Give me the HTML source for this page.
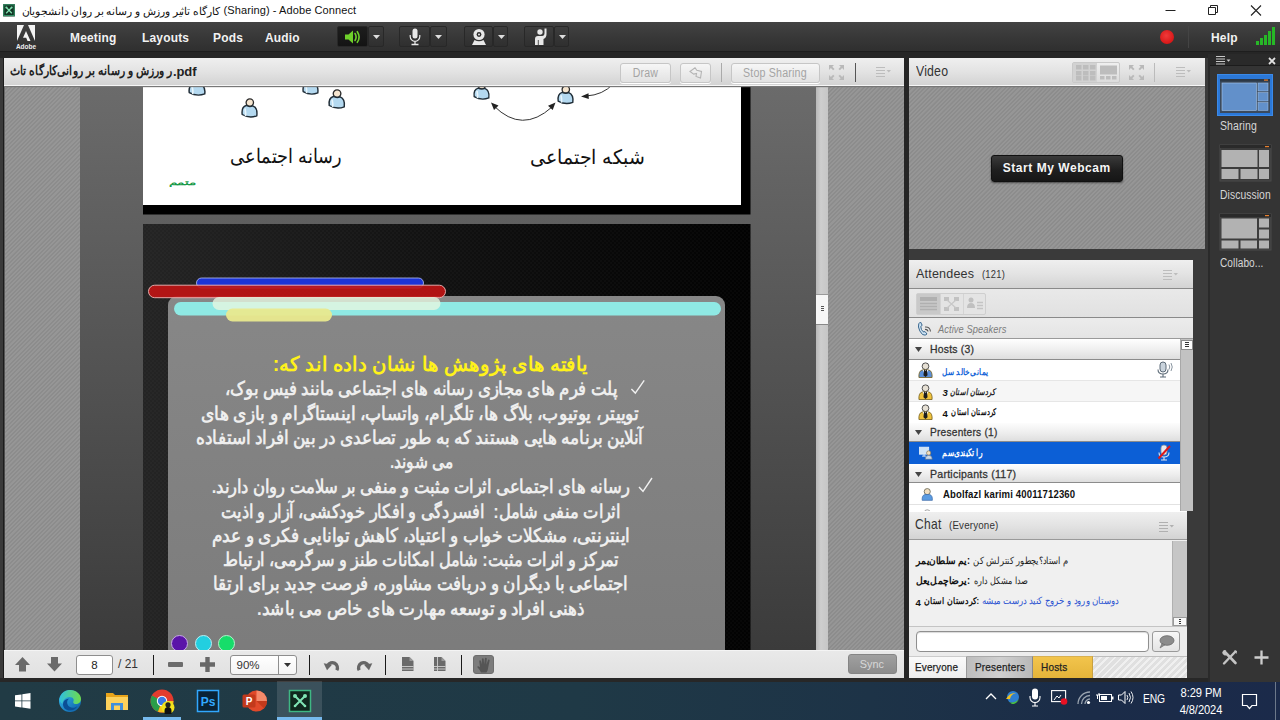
<!DOCTYPE html>
<html lang="en">
<head>
<meta charset="utf-8">
<title>Adobe Connect</title>
<style>
*{box-sizing:border-box;margin:0;padding:0}
html,body{width:1280px;height:720px;overflow:hidden}
body{position:relative;background:#3a3a3a;font-family:"Liberation Sans",sans-serif;font-size:12px;color:#222}
.abs{position:absolute}
svg{position:absolute;overflow:visible}
#titlebar{left:0;top:0;width:1280px;height:22px;background:#fff}
#menubar{left:0;top:22px;width:1280px;height:30px;background:linear-gradient(#434343,#383838 50%,#2f2f2f);border-bottom:1px solid #1e1e1e}
#band{left:0;top:52px;width:1280px;height:6px;background:#262626}
.menu{position:absolute;top:8px;color:#f2f2f2;font-weight:bold;font-size:13px;letter-spacing:0.2px;white-space:nowrap;transform:scaleX(0.92);transform-origin:0 0}
.nx{transform:scaleX(0.92);transform-origin:0 0}
.tbtn{position:absolute;top:4px;height:21px;background:linear-gradient(#3d3d3d,#2f2f2f);border:1px solid #282828;border-radius:2px}
.hatch{background-color:#919191;background-image:repeating-linear-gradient(135deg,#969696 0 1.4px,#8c8c8c 1.6px 2.9px,#969696 3px)}
.podhead{position:absolute;left:0;top:0;right:0;height:28px;background:linear-gradient(#efefef,#e3e3e3 50%,#d3d3d3);border-bottom:1px solid #f6f6f6;box-shadow:0 1px 1px #777}
.podtitle{position:absolute;left:7px;top:6px;font-size:13px;color:#333;white-space:nowrap;letter-spacing:0.2px}
.pod{position:absolute;overflow:hidden}
</style>
</head>
<body>
<!-- ===== title bar ===== -->
<div id="titlebar" class="abs">
<svg style="left:3px;top:4px" width="12" height="12.500" viewBox="0 0 15 15" preserveAspectRatio="none"><rect width="15" height="15" rx="1" fill="#1d3b2c"/><rect x="1" y="1" width="13" height="13" fill="#123524" stroke="#3fae7c" stroke-width="1"/><path d="M4 4l7 7M11 4l-7 7" stroke="#7fe0b0" stroke-width="1.6"/><circle cx="4.2" cy="4.2" r="1.3" fill="#7fe0b0"/><circle cx="10.800" cy="4.2" r="1.3" fill="#7fe0b0"/></svg>
<svg style="left:0;top:0" width="400" height="22" role="img" aria-label="کارگاه تاثیر ورزش و رسانه بر روان دانشجویان"><text x="120.6" y="15.2" font-size="11" fill="#111" text-anchor="middle" direction="rtl" textLength="197.8" lengthAdjust="spacingAndGlyphs" font-family="'Liberation Sans',sans-serif">کارگاه تاثیر ورزش و رسانه بر روان دانشجویان</text></svg>
<div id="ttl" class="abs" style="left:223.500px;top:4px;font-size:11px;color:#111;white-space:nowrap;letter-spacing:0.1px">(Sharing) - Adobe Connect</div>
<svg style="left:1150px;top:0" width="130" height="22"><path d="M15.5 10.5h10" stroke="#222" stroke-width="1"/><path d="M58.5 7.5h7v7h-7zM60.5 7.5v-2h7v7h-2" fill="none" stroke="#222" stroke-width="1"/><path d="M101 5.5l10 10M111 5.5l-10 10" stroke="#222" stroke-width="1.1"/></svg>
</div>
<!-- ===== menu bar ===== -->
<div id="menubar" class="abs">
<svg style="left:14px;top:2px" width="24" height="27" viewBox="0 0 24 27"><path d="M3 1h7L3 17zM14 1h7v16zM12 7l4.5 10h-3l-1.3-3.2H9z" fill="#f4f4f4"/><text x="12" y="25" font-size="6.5" font-weight="bold" text-anchor="middle" fill="#eee" font-family="Liberation Sans,sans-serif">Adobe</text></svg>
<div class="menu" style="left:70px">Meeting</div>
<div class="menu" style="left:142px">Layouts</div>
<div class="menu" style="left:213px">Pods</div>
<div class="menu" style="left:265px">Audio</div>
<div class="tbtn" style="left:337px;width:31px;background:linear-gradient(#1d1d1d,#141414)"><svg style="left:6px;top:2px" width="20" height="16" viewBox="0 0 20 16"><path d="M1 5.5h3.5L9 1.5v13L4.5 10.5H1z" fill="#6ed02a"/><path d="M11 4.5q2.2 3.5 0 7M13.3 2.7q3.6 5.3 0 10.6" fill="none" stroke="#6ed02a" stroke-width="1.6" stroke-linecap="round"/></svg></div><div class="tbtn" style="left:368px;width:16px"><svg style="left:4px;top:8px" width="8" height="5"><path d="M0 0h7l-3.5 4z" fill="#ddd"/></svg></div>
<div class="tbtn" style="left:399px;width:31px;background:linear-gradient(#3d3d3d,#2f2f2f)"><svg style="left:9px;top:1px" width="12" height="18" viewBox="0 0 12 18"><rect x="3.5" y="0.5" width="5" height="10" rx="2.5" fill="#e8e8e8"/><path d="M1.2 7v1.5a4.8 4.8 0 0 0 9.6 0V7" fill="none" stroke="#e8e8e8" stroke-width="1.2"/><path d="M6 13.5v2.5M2.5 16.5h7" stroke="#e8e8e8" stroke-width="1.3"/></svg></div><div class="tbtn" style="left:430px;width:17px"><svg style="left:4px;top:8px" width="8" height="5"><path d="M0 0h7l-3.5 4z" fill="#ddd"/></svg></div>
<div class="tbtn" style="left:464px;width:29px;background:linear-gradient(#3d3d3d,#2f2f2f)"><svg style="left:6px;top:1px" width="16" height="18" viewBox="0 0 16 18"><circle cx="8" cy="6.5" r="5.6" fill="#e8e8e8"/><circle cx="8" cy="6.5" r="2.4" fill="#2c2c2c"/><circle cx="8" cy="6.5" r="1" fill="#e8e8e8"/><path d="M3.5 12L1 17h14l-2.500-5q-4.500 2.500-9 0z" fill="#e8e8e8"/></svg></div><div class="tbtn" style="left:493px;width:15px"><svg style="left:4px;top:8px" width="8" height="5"><path d="M0 0h7l-3.5 4z" fill="#ddd"/></svg></div>
<div class="tbtn" style="left:524px;width:30px;background:linear-gradient(#3d3d3d,#2f2f2f)"><svg style="left:8px;top:0px" width="16" height="19" viewBox="0 0 16 19"><circle cx="7" cy="5" r="2.7" fill="#e8e8e8"/><path d="M2 18v-6q0-3 3-3h4q2.500 0 2.500-3V1.500h2V7q0 4-3 5v6z" fill="#e8e8e8"/><path d="M5.300 13v5" stroke="#2c2c2c" stroke-width="0.8"/></svg></div><div class="tbtn" style="left:554px;width:15px"><svg style="left:4px;top:8px" width="8" height="5"><path d="M0 0h7l-3.5 4z" fill="#ddd"/></svg></div>
<div class="abs" style="left:1160px;top:8px;width:14px;height:14px;border-radius:7px;background:radial-gradient(circle at 45% 40%,#f03a3a,#d81818 70%,#b01010)"></div>
<div class="abs" style="left:1188px;top:4px;width:1px;height:22px;background:#444"></div>
<div class="menu" style="left:1211px">Help</div>
<svg style="left:1256px;top:5px" width="22" height="20"><rect x="0" y="14" width="3" height="4" fill="#27b827"/><rect x="4" y="11" width="3" height="7" fill="#27b827"/><rect x="8" y="8" width="3" height="10" fill="#27b827"/><rect x="12" y="4" width="3" height="14" fill="#27b827"/><rect x="16" y="0" width="3" height="18" fill="#27b827"/></svg>
</div>
<div id="band" class="abs"></div>
<div class="abs" style="left:904px;top:58px;width:5px;height:620px;background:#252525"></div>
<div class="abs" style="left:3px;top:58px;width:1px;height:620px;background:#1c1c1c"></div>
<div class="abs" style="left:0;top:678px;width:1208px;height:4px;background:#272727"></div>
<!-- ===== share pod ===== -->
<div id="share" class="pod" style="left:4px;top:58px;width:900px;height:620px;background:linear-gradient(#6b6b6b 28px,#3b3b3b 592px)">
<div class="abs hatch" style="left:1px;top:28px;width:75px;height:564px"></div>
<div class="abs hatch" style="left:824px;top:28px;width:76px;height:564px"></div>
<div class="abs" style="left:812px;top:28px;width:12px;height:564px;background:linear-gradient(90deg,#b8b8b8,#cecece 40%,#c6c6c6)"></div>
<div class="abs" style="left:812px;top:236px;width:12px;height:31px;background:#f6f6f6;border-top:1px solid #999;border-bottom:1px solid #888"></div>
<div class="abs" style="left:817px;top:248px;width:3px;height:1px;background:#555;box-shadow:0 2px 0 #555,0 4px 0 #555"></div>
<svg style="left:-4px;top:-58px" width="1280" height="720" viewBox="0 0 1280 720" role="img" aria-label="رسانه اجتماعی - شبکه اجتماعی - یافته های پژوهش ها نشان داده اند که: پلت فرم های مجازی رسانه های اجتماعی مانند فیس بوک، توییتر، یوتیوب، بلاگ ها، تلگرام، واتساپ، اینستاگرام و بازی های آنلاین برنامه هایی هستند که به طور تصاعدی در بین افراد استفاده می شوند. رسانه های اجتماعی اثرات مثبت و منفی بر سلامت روان دارند.">
<defs><linearGradient id="sl2" x1="0" y1="0" x2="1" y2="0"><stop offset="0" stop-color="#242424"/><stop offset="0.300" stop-color="#181818"/><stop offset="0.700" stop-color="#0a0a0a"/><stop offset="1" stop-color="#020202"/></linearGradient><linearGradient id="gbox" x1="0" y1="0" x2="0" y2="1"><stop offset="0" stop-color="#878787"/><stop offset="0.500" stop-color="#818181"/><stop offset="1" stop-color="#7b7b7b"/></linearGradient><pattern id="cf" width="4" height="4" patternUnits="userSpaceOnUse"><rect width="2" height="2" fill="rgba(255,255,255,0.02)"/><rect x="2" y="2" width="2" height="2" fill="rgba(255,255,255,0.02)"/></pattern><clipPath id="slclip"><rect x="143" y="86" width="608" height="564"/></clipPath></defs>
<g clip-path="url(#slclip)">
<rect x="143" y="80" width="607.500" height="134.500" fill="#000"/>
<rect x="143" y="80" width="598" height="125" fill="#fff"/>
<g transform="translate(188.0 77.0) scale(1.059 0.950)"><circle cx="8.800" cy="4.600" r="3.700" fill="#f6e6d0" stroke="#2a2a2a" stroke-width="1.300"/><path d="M1.200 16.500q-1-7.500 4-9q3.300 1.800 6.600 0.300q5 2 4 10q-7.300 3-14.600-1.300z" fill="#b4d9f0" stroke="#1f2c36" stroke-width="1.400"/><path d="M4 10.500q1 5 0.500 7.500" stroke="#e9f6fd" stroke-width="1.600" fill="none"/></g>
<g transform="translate(241.0 98.0) scale(1.000 1.000)"><circle cx="8.800" cy="4.600" r="3.700" fill="#f6e6d0" stroke="#2a2a2a" stroke-width="1.300"/><path d="M1.200 16.500q-1-7.500 4-9q3.300 1.800 6.600 0.300q5 2 4 10q-7.300 3-14.600-1.300z" fill="#b4d9f0" stroke="#1f2c36" stroke-width="1.400"/><path d="M4 10.500q1 5 0.500 7.500" stroke="#e9f6fd" stroke-width="1.600" fill="none"/></g>
<g transform="translate(302.0 76.0) scale(1.000 0.950)"><circle cx="8.800" cy="4.600" r="3.700" fill="#f6e6d0" stroke="#2a2a2a" stroke-width="1.300"/><path d="M1.200 16.500q-1-7.500 4-9q3.300 1.800 6.600 0.300q5 2 4 10q-7.300 3-14.600-1.300z" fill="#b4d9f0" stroke="#1f2c36" stroke-width="1.400"/><path d="M4 10.500q1 5 0.500 7.500" stroke="#e9f6fd" stroke-width="1.600" fill="none"/></g>
<g transform="translate(328.0 89.0) scale(1.029 1.000)"><circle cx="8.800" cy="4.600" r="3.700" fill="#f6e6d0" stroke="#2a2a2a" stroke-width="1.300"/><path d="M1.200 16.500q-1-7.500 4-9q3.300 1.800 6.600 0.300q5 2 4 10q-7.300 3-14.600-1.300z" fill="#b4d9f0" stroke="#1f2c36" stroke-width="1.400"/><path d="M4 10.500q1 5 0.500 7.500" stroke="#e9f6fd" stroke-width="1.600" fill="none"/></g>
<g transform="translate(473.0 81.0) scale(1.000 0.950)"><circle cx="8.800" cy="4.600" r="3.700" fill="#f6e6d0" stroke="#2a2a2a" stroke-width="1.300"/><path d="M1.200 16.500q-1-7.500 4-9q3.300 1.800 6.600 0.300q5 2 4 10q-7.300 3-14.600-1.300z" fill="#b4d9f0" stroke="#1f2c36" stroke-width="1.400"/><path d="M4 10.500q1 5 0.500 7.500" stroke="#e9f6fd" stroke-width="1.600" fill="none"/></g>
<g transform="translate(557.0 85.0) scale(1.000 0.975)"><circle cx="8.800" cy="4.600" r="3.700" fill="#f6e6d0" stroke="#2a2a2a" stroke-width="1.300"/><path d="M1.200 16.500q-1-7.500 4-9q3.300 1.800 6.600 0.300q5 2 4 10q-7.300 3-14.600-1.300z" fill="#b4d9f0" stroke="#1f2c36" stroke-width="1.400"/><path d="M4 10.500q1 5 0.500 7.500" stroke="#e9f6fd" stroke-width="1.600" fill="none"/></g>
<path d="M494 106Q522 134 552 107" fill="none" stroke="#333" stroke-width="1"/>
<path d="M491 102.500l7.500 3-4.500 4.500zM555.500 102.500l-7.500 3.200 4.700 4.300z" fill="#222"/>
<path d="M613 84Q603 95 586 96" fill="none" stroke="#333" stroke-width="1"/>
<path d="M581 96.500l7.500-3.300 0.300 5.800z" fill="#222"/>
<text x="286.1" y="163" font-size="20" fill="#111" text-anchor="middle" direction="rtl" textLength="112.3" lengthAdjust="spacingAndGlyphs" font-family="'Liberation Sans',sans-serif">رسانه اجتماعی</text>
<text x="587.5" y="163.5" font-size="20" fill="#111" text-anchor="middle" direction="rtl" textLength="115.2" lengthAdjust="spacingAndGlyphs" font-family="'Liberation Sans',sans-serif">شبکه اجتماعی</text>
<text x="182" y="184.500" font-size="8" font-weight="bold" fill="#1a9a4a" text-anchor="middle" direction="rtl" textLength="27" lengthAdjust="spacingAndGlyphs" font-family="'Liberation Sans',sans-serif">متمم</text>
<rect x="143" y="224" width="607.500" height="430" fill="url(#sl2)"/>
<rect x="143" y="224" width="607.500" height="430" fill="url(#cf)"/>
<rect x="168" y="296" width="557" height="380" rx="9" fill="url(#gbox)"/>
<rect x="196.500" y="278" width="227" height="10" rx="5" fill="#1c34d6" stroke="#b8c2f4" stroke-width="0.800"/>
<rect x="148.500" y="285.200" width="297" height="12.500" rx="6.200" fill="#c21414" fill-opacity="0.900" stroke="#f0b8b8" stroke-width="0.900"/>
<rect x="174" y="302" width="547" height="13.500" rx="6.700" fill="#8fe9e4"/>
<rect x="212.500" y="297" width="228" height="13" rx="6.500" fill="#e6f6e0" fill-opacity="0.800"/>
<rect x="226" y="308.500" width="106" height="13" rx="6.500" fill="#e9e98e" fill-opacity="0.950"/>
<circle cx="179.500" cy="643.500" r="8" fill="#5a14a8" stroke="#c9a8e8" stroke-width="1"/>
<circle cx="203.500" cy="643.500" r="8" fill="#22cfe0" stroke="#b8f0f4" stroke-width="1"/>
<circle cx="226.500" cy="643.500" r="8" fill="#16dd6a" stroke="#b0f4cc" stroke-width="1"/>
<text x="430.4" y="370.5" font-size="20" font-weight="bold" fill="#fff21a" text-anchor="middle" direction="rtl" textLength="315.3" lengthAdjust="spacingAndGlyphs" font-family="'Liberation Sans',sans-serif">یافته های پژوهش ها نشان داده اند که:</text>
<g font-size="19" font-weight="bold" fill="#eeeeee" text-anchor="middle" direction="rtl" font-family="'Liberation Sans',sans-serif">
<text x="420.9" y="395" textLength="392" lengthAdjust="spacingAndGlyphs">پلت فرم های مجازی رسانه های اجتماعی مانند فیس بوک،</text>
<text x="419.8" y="419.6" textLength="438.2" lengthAdjust="spacingAndGlyphs">توییتر، یوتیوب، بلاگ ها، تلگرام، واتساپ، اینستاگرام و بازی های</text>
<text x="419.5" y="443.9" textLength="446.5" lengthAdjust="spacingAndGlyphs">آنلاین برنامه هایی هستند که به طور تصاعدی در بین افراد استفاده</text>
<text x="421.5" y="468.2" textLength="63.2" lengthAdjust="spacingAndGlyphs">می شوند.</text>
<text x="420.7" y="493.2" textLength="418" lengthAdjust="spacingAndGlyphs">رسانه های اجتماعی اثرات مثبت و منفی بر سلامت روان دارند.</text>
<text x="420.6" y="517.5" textLength="398.9" lengthAdjust="spacingAndGlyphs" xml:space="preserve">اثرات منفی شامل:  افسردگی و افکار خودکشی، آزار و اذیت</text>
<text x="420.7" y="541.8" textLength="418" lengthAdjust="spacingAndGlyphs">اینترنتی، مشکلات خواب و اعتیاد، کاهش توانایی فکری و عدم</text>
<text x="420.8" y="566.1" textLength="395.8" lengthAdjust="spacingAndGlyphs">تمرکز و اثرات مثبت: شامل امکانات طنز و سرگرمی، ارتباط</text>
<text x="420.3" y="590.4" textLength="415.2" lengthAdjust="spacingAndGlyphs">اجتماعی با دیگران و دریافت مشاوره، فرصت جدید برای ارتقا</text>
<text x="420.5" y="614.7" textLength="327" lengthAdjust="spacingAndGlyphs">ذهنی افراد و توسعه مهارت های خاص می باشد.</text>
</g>
<path d="M631.400 389l3.900 4.100 8.900-12.800" fill="none" stroke="#f0f0f0" stroke-width="1.400"/>
<path d="M639 487l4 4.300 9-13.300" fill="none" stroke="#f0f0f0" stroke-width="1.400"/>
</g>
</svg>
<div class="podhead">
<svg style="left:-4px;top:-58px" width="400" height="100" role="img" aria-label="pdf.ر ورزش و رسانه بر روان"><text x="90.9" y="74.5" font-size="13" font-weight="bold" fill="#222" text-anchor="middle" direction="rtl" textLength="162.5" lengthAdjust="spacingAndGlyphs" font-family="'Liberation Sans',sans-serif">ر ورزش و رسانه بر روانی‌کارگاه تاث</text></svg>
<div class="abs" style="left:169px;top:5.500px;font-size:13px;font-weight:bold;color:#222;letter-spacing:-0.1px">.pdf</div>
<div class="abs" style="left:615.5px;top:4.500px;width:51.5px;height:20px;border:1px solid #c6c6c6;border-radius:3px;background:linear-gradient(#f6f6f6,#e2e2e2);box-shadow:0 1px 0 #fff;color:#a4a4a4;font-size:12px;text-align:center;line-height:18px;letter-spacing:0.2px"><span style="display:inline-block;transform:scaleX(0.88)">Draw</span></div>
<div class="abs" style="left:675.5px;top:4.500px;width:31.5px;height:20px;border:1px solid #c6c6c6;border-radius:3px;background:linear-gradient(#f6f6f6,#e2e2e2);box-shadow:0 1px 0 #fff;color:#a4a4a4;font-size:12px;text-align:center;line-height:18px;letter-spacing:0.2px"><svg style="left:8px;top:3px" width="14" height="13" viewBox="0 0 14 13"><path d="M1 4.500L6 0.800l1.800 2.500 4.700 1.200-1 6.500-4.500-1.500 0.500-3-2.800 0.600z" fill="none" stroke="#b4b4b4" stroke-width="1.100"/></svg></div>
<div class="abs" style="left:717px;top:5px;width:1px;height:19px;background:#aaa"></div>
<div class="abs" style="left:726.5px;top:4.500px;width:89.0px;height:20px;border:1px solid #c6c6c6;border-radius:3px;background:linear-gradient(#f6f6f6,#e2e2e2);box-shadow:0 1px 0 #fff;color:#a4a4a4;font-size:12px;text-align:center;line-height:18px;letter-spacing:0.2px"><span style="display:inline-block;transform:scaleX(0.89);white-space:nowrap">Stop Sharing</span></div>
<svg style="left:825px;top:7px" width="15" height="15"><path d="M0 0h5l-1.700 1.700 2.200 2.200-1.400 1.400-2.200-2.200L0 5zM15 0h-5l1.700 1.700-2.200 2.200 1.400 1.400 2.200-2.200L15 5zM0 15h5l-1.700-1.700 2.200-2.200-1.400-1.400-2.200 2.200L0 10zM15 15h-5l1.700-1.700-2.200-2.200 1.400-1.400 2.200 2.200L15 10z" fill="#b9b9b9"/></svg>
<div class="abs" style="left:851px;top:5px;width:1px;height:19px;background:#555"></div>
<svg style="left:872px;top:9px" width="16" height="11"><path d="M0 0.500h9M0 3.500h9M0 6.500h9M0 9.500h9" stroke="#bdbdbd" stroke-width="1"/><path d="M10.500 3h4.500l-2.200 2.500z" fill="#bdbdbd"/></svg>
</div>
<div class="abs" style="left:0;top:592px;width:900px;height:28px;background:linear-gradient(#e9e9e9,#e1e1e1);border-top:1px solid #f4f4f4">
<svg style="left:11px;top:6px" width="15" height="15"><path d="M7.500 0L15 8h-4v6.500H4V8H0z" fill="#6a6a6a"/></svg>
<svg style="left:43px;top:6px" width="15" height="15"><g transform="rotate(180 7.500 7.250)"><path d="M7.500 0L15 8h-4v6.500H4V8H0z" fill="#6a6a6a"/></g></svg>
<div class="abs" style="left:72px;top:3.500px;width:37px;height:20px;border:1px solid #8e8e8e;border-radius:3px;background:#fff;text-align:center;font-size:11.500px;line-height:18px;color:#222">8</div>
<div class="abs" style="left:114px;top:6px;font-size:12px;color:#333;white-space:nowrap">/ 21</div>
<div class="abs" style="left:148.7px;top:3.500px;width:1px;height:20px;background:#1a1a1a"></div>
<div class="abs" style="left:305.2px;top:3.500px;width:1px;height:20px;background:#1a1a1a"></div>
<div class="abs" style="left:381.2px;top:3.500px;width:1px;height:20px;background:#1a1a1a"></div>
<div class="abs" style="left:457.2px;top:3.500px;width:1px;height:20px;background:#1a1a1a"></div>
<div class="abs" style="left:164px;top:11px;width:15px;height:4.500px;background:#6c6c6c;border-radius:1px"></div>
<svg style="left:195.500px;top:6px" width="15" height="15"><path d="M5.300 0h4.400v5.300H15v4.400H9.700V15H5.300V9.700H0V5.300h5.300z" fill="#686868"/></svg>
<div class="abs" style="left:225.500px;top:3.500px;width:67.500px;height:20px;border:1px solid #8e8e8e;border-radius:3px;background:linear-gradient(#fff,#f4f4f4);font-size:11.500px;line-height:19px;color:#333;padding-left:6px">90%<div class="abs" style="left:47px;top:0;width:1px;height:18px;background:#8e8e8e"></div><svg style="left:53px;top:7px" width="8" height="5"><path d="M0 0h7l-3.500 4z" fill="#333"/></svg></div>
<svg style="left:320px;top:6.500px" width="16" height="14" viewBox="0 0 16 14"><path d="M12.800 12.300A4.800 4.800 0 1 0 3.800 7.300" stroke="#666" stroke-width="3.300" fill="none"/><path d="M-0.300 5.300l8.300 1.400-5 5.600z" fill="#666"/></svg>
<svg style="left:352px;top:6.500px" width="16" height="14" viewBox="0 0 16 14"><g transform="translate(16 0) scale(-1 1)"><path d="M12.800 12.300A4.800 4.800 0 1 0 3.800 7.300" stroke="#666" stroke-width="3.300" fill="none"/><path d="M-0.300 5.300l8.300 1.400-5 5.600z" fill="#666"/></g></svg>
<svg style="left:398px;top:6px" width="12" height="15"><path d="M0 0h7.500l4 4v10H0z" fill="#6a6a6a"/><path d="M7.500 0v4h4z" fill="#9a9a9a"/><path d="M0 9.500h11.500M0 12h11.500" stroke="#cfcfcf" stroke-width="0.900"/></svg>
<svg style="left:430px;top:6px" width="12" height="15"><path d="M0 0h7.500l4 4v10H0z" fill="#6a6a6a"/><path d="M7.500 0v4h4z" fill="#9a9a9a"/><path d="M0 9.500h11.500M0 12h11.500M3.500 0v14" stroke="#cfcfcf" stroke-width="0.900"/></svg>
<div class="abs" style="left:469px;top:3.500px;width:21px;height:19.500px;border-radius:3px;background:#7c7c7c;border:1px solid #6e6e6e"><svg style="left:2.500px;top:1.500px" width="15" height="16" viewBox="0 0 15 16"><path d="M4 15.500q-1-2.500-3.800-5.500q.8-1.500 2.800.3L2.200 3.800q.9-1.100 1.700 0l.9 3.700L4.900 1.800q1-1 1.800 0l.4 5.500.9-6.200q1-.9 1.800.1l-.4 6.500 1.700-4.900q1-.6 1.600.4l-1.300 6.300q-.3 3.500-1.900 6z" fill="#555"/></svg></div>
<div class="abs" style="left:844px;top:2.500px;width:48.500px;height:20px;border-radius:3px;background:linear-gradient(#a0a0a0,#8c8c8c);border:1px solid #858585;color:#d8d8d8;font-size:11.500px;text-align:center;line-height:18px"><span style="display:inline-block;transform:scaleX(0.94)">Sync</span></div>
</div>
</div>
<!-- ===== video pod ===== -->
<div id="video" class="pod hatch" style="left:909px;top:58px;width:295.500px;height:191px">
<div class="podhead"><div class="podtitle nx" style="font-size:14px;top:5px;transform:scaleX(0.88)">Video</div>
<div class="abs" style="left:163px;top:4px;width:48px;height:21px;border:1px solid #c9c9c9;border-radius:2px;background:linear-gradient(#efefef,#dcdcdc)"></div>
<svg style="left:164px;top:5px" width="24" height="19"><rect width="24" height="19" fill="#d2d2d2"/><rect x="3" y="2" width="5.500" height="4.500" fill="#bdbdbd"/><rect x="10" y="2" width="5.500" height="4.500" fill="#bdbdbd"/><rect x="17" y="2" width="5.500" height="4.500" fill="#bdbdbd"/><rect x="3" y="8" width="5.500" height="4.500" fill="#bdbdbd"/><rect x="10" y="8" width="5.500" height="4.500" fill="#bdbdbd"/><rect x="17" y="8" width="5.500" height="4.500" fill="#bdbdbd"/><rect x="3" y="13" width="5.500" height="4.500" fill="#bdbdbd"/><rect x="10" y="13" width="5.500" height="4.500" fill="#bdbdbd"/><rect x="17" y="13" width="5.500" height="4.500" fill="#bdbdbd"/></svg>
<svg style="left:188px;top:5px" width="23" height="19"><rect x="3" y="2.500" width="17" height="9" fill="#bdbdbd"/><rect x="3" y="13" width="4.500" height="3.500" fill="#bdbdbd"/><rect x="9" y="13" width="4.500" height="3.500" fill="#bdbdbd"/><rect x="15" y="13" width="4.500" height="3.500" fill="#bdbdbd"/></svg>
<svg style="left:220px;top:7px" width="15" height="15"><path d="M0 0h5l-1.700 1.700 2.200 2.200-1.400 1.400-2.200-2.200L0 5zM15 0h-5l1.700 1.700-2.200 2.200 1.400 1.400 2.200-2.200L15 5zM0 15h5l-1.700-1.700 2.200-2.200-1.400-1.400-2.200 2.200L0 10zM15 15h-5l1.700-1.700-2.200-2.200 1.400-1.400 2.200 2.200L15 10z" fill="#b9b9b9"/></svg>
<div class="abs" style="left:245px;top:5px;width:1px;height:19px;background:#bbb"></div>
<svg style="left:267px;top:9px" width="16" height="11"><path d="M0 0.500h9M0 3.500h9M0 6.500h9M0 9.500h9" stroke="#bdbdbd" stroke-width="1"/><path d="M10.500 3h4.500l-2.200 2.500z" fill="#bdbdbd"/></svg>
</div>
<div class="abs" style="left:82px;top:97px;width:131.500px;height:26.500px;border-radius:3px;background:linear-gradient(#3a3a3a,#1f1f1f 55%,#161616);border:1px solid #111;box-shadow:0 1px 2px rgba(0,0,0,0.5);color:#f6f6f6;font-weight:bold;font-size:12px;text-align:center;line-height:24.500px;letter-spacing:0.55px">Start My Webcam</div>
</div>
<!-- ===== attendees pod ===== -->
<div id="att" class="pod" style="left:909px;top:260px;width:284px;height:251px;background:#fff">
<div class="podhead" style="height:29px;border-bottom:1px solid #8a8a8a;box-shadow:none"><div class="podtitle nx" style="font-size:13.500px;top:6px;transform:scaleX(0.93)">Attendees</div><div class="abs nx" style="left:73px;top:8px;font-size:11px;color:#333;letter-spacing:0.3px;transform:scaleX(0.85)">(121)</div>
<svg style="left:254px;top:10px" width="16" height="11"><path d="M0 0.500h9M0 3.500h9M0 6.500h9M0 9.500h9" stroke="#bdbdbd" stroke-width="1"/><path d="M10.500 3h4.500l-2.200 2.500z" fill="#bdbdbd"/></svg>
</div>
<div class="abs" style="left:0;top:29px;width:284px;height:29px;background:linear-gradient(#e9e9e9,#e1e1e1);border-bottom:1px solid #8a8a8a"></div>
<div class="abs" style="left:7px;top:32.500px;width:70px;height:22px;border:1px solid #cfcfcf;border-radius:2px;background:#e4e4e4"></div>
<div class="abs" style="left:8px;top:33.500px;width:22.500px;height:20px;background:#c9c9c9"></div>
<svg style="left:11px;top:37px" width="17" height="14"><rect width="17" height="4" fill="#b0b0b0"/><path d="M0 6.500h17M0 9.500h17M0 12.500h17" stroke="#b0b0b0" stroke-width="1.500"/></svg>
<div class="abs" style="left:30.500px;top:33.500px;width:1px;height:20px;background:#d4d4d4"></div><div class="abs" style="left:53.500px;top:33.500px;width:1px;height:20px;background:#d4d4d4"></div>
<svg style="left:35px;top:37px" width="15" height="14"><rect x="0" y="0" width="5" height="4" fill="#c2c2c2"/><rect x="10" y="0" width="5" height="4" fill="#c2c2c2"/><rect x="0" y="10" width="5" height="4" fill="#c2c2c2"/><rect x="10" y="10" width="5" height="4" fill="#c2c2c2"/><path d="M3 3l9 8M12 3l-9 8" stroke="#c8c8c8" stroke-width="1.200"/></svg>
<svg style="left:58px;top:37px" width="16" height="14"><circle cx="4" cy="3" r="2.500" fill="#c0c0c0"/><path d="M0 11q0-5 4-5t4 5z" fill="#c0c0c0"/><path d="M10 5.500h6M10 8.500h6M10 11.500h6" stroke="#c4c4c4" stroke-width="1.300"/></svg>
<div class="abs" style="left:0;top:58px;width:284px;height:21px;background:linear-gradient(#ececec,#e4e4e4);border-bottom:1px solid #9a9a9a"></div>
<svg style="left:8px;top:61px" width="15" height="16" viewBox="0 0 15 16"><path d="M3.500 1q-2.500 1-2 5t4 7.500q3 1.500 4.500-.5l-2-2.500q-1 .8-2 .2-2-2-2.200-5 .200-1 1.400-1.400z" fill="#cfe4f4" stroke="#39678f" stroke-width="1"/><path d="M8 8.500q2.500-.5 3 2M8 6q5-.5 5.500 4.500" fill="none" stroke="#555" stroke-width="1.100"/></svg>
<div class="abs" style="left:29px;top:63px;font-size:11px;font-style:italic;color:#7c7c7c;letter-spacing:0.1px;white-space:nowrap;transform:scaleX(0.845);transform-origin:0 0">Active Speakers</div>
<div class="abs" style="left:0;top:79.0px;width:270.500px;height:20.5px;background:linear-gradient(#fdfdfd,#ececec 60%,#dedede);border-bottom:1px solid #8c8c8c;border-top:1px solid #fff"></div><svg style="left:6px;top:87.0px" width="8" height="6"><path d="M0 0h7l-3.500 5z" fill="#444"/></svg><div class="abs" style="left:20.500px;top:83.0px;font-size:11.500px;color:#333;letter-spacing:0.25px;white-space:nowrap;-webkit-text-stroke:0.3px #333;transform:scaleX(0.905);transform-origin:0 0">Hosts (3)</div>
<div class="abs" style="left:0;top:99.500px;width:270.500px;height:21.500px;background:#fff;border-bottom:1px solid #e6e6e6"></div>
<div class="abs" style="left:0;top:121px;width:270.500px;height:20.500px;background:#f6f6f6;border-bottom:1px solid #e6e6e6"></div>
<div class="abs" style="left:0;top:141.500px;width:270.500px;height:20.500px;background:#fff"></div>
<svg style="left:9px;top:102px" width="15" height="16" viewBox="0 0 16 17"><circle cx="8" cy="4.500" r="3.600" fill="#e6e0d4" stroke="#4a4a4a" stroke-width="1"/><path d="M1 16.500q-0.500-7 3.500-8h7q4 1 3.500 8z" fill="#5b8fd8" stroke="#7a6420" stroke-width="0.900"/><path d="M5 8.500L8 15l3-6.500z" fill="#f4f4f4"/><path d="M6.500 8l1.500 1.200L9.500 8l0.700 6L8 16l-2.200-2z" fill="#1e1e1e"/></svg>
<svg style="left:9px;top:123.500px" width="15" height="16" viewBox="0 0 16 17"><circle cx="8" cy="4.500" r="3.600" fill="#e6e0d4" stroke="#4a4a4a" stroke-width="1"/><path d="M1 16.500q-0.500-7 3.500-8h7q4 1 3.500 8z" fill="#f0c23c" stroke="#7a6420" stroke-width="0.900"/><path d="M5 8.500L8 15l3-6.500z" fill="#f4f4f4"/><path d="M6.500 8l1.500 1.200L9.500 8l0.700 6L8 16l-2.200-2z" fill="#1e1e1e"/></svg>
<svg style="left:9px;top:144px" width="15" height="16" viewBox="0 0 16 17"><circle cx="8" cy="4.500" r="3.600" fill="#e6e0d4" stroke="#4a4a4a" stroke-width="1"/><path d="M1 16.500q-0.500-7 3.500-8h7q4 1 3.500 8z" fill="#f0c23c" stroke="#7a6420" stroke-width="0.900"/><path d="M5 8.500L8 15l3-6.500z" fill="#f4f4f4"/><path d="M6.500 8l1.500 1.200L9.500 8l0.700 6L8 16l-2.200-2z" fill="#1e1e1e"/></svg>
<svg style="left:-909px;top:-260px" width="1280" height="720" role="img" aria-label="کردستان استان 3، کردستان استان 4"><text x="965.2" y="374.6" font-size="9" font-weight="bold" fill="#1565d8" text-anchor="middle" direction="rtl" textLength="45.9" lengthAdjust="spacingAndGlyphs" font-family="'Liberation Sans',sans-serif">یمانی‌خالد سل</text><g transform="skewX(-10)" style="transform-origin:970px 390px"><text x="973.4" y="395" font-size="9" font-weight="bold" fill="#222" text-anchor="middle" direction="rtl" textLength="45.1" lengthAdjust="spacingAndGlyphs" font-family="'Liberation Sans',sans-serif">کردستان استان</text></g><text x="973.8" y="414.500" font-size="9" font-weight="bold" fill="#111" text-anchor="middle" direction="rtl" textLength="45" lengthAdjust="spacingAndGlyphs" font-family="'Liberation Sans',sans-serif">کردستان استان</text></svg>
<div class="abs" style="left:33.500px;top:127px;font-size:9.500px;font-weight:bold;font-style:italic;color:#111">3</div>
<div class="abs" style="left:33.500px;top:147.500px;font-size:9.500px;font-weight:bold;color:#111">4</div>
<svg style="left:248px;top:101px" width="17" height="18" viewBox="0 0 17 18"><rect x="3" y="1" width="6" height="10" rx="3" fill="#c9d3dc" stroke="#5d6b78" stroke-width="1"/><path d="M1 8.500q0 4.500 5 4.500t5-4.500M6 13v2.500M3 16h6" fill="none" stroke="#5d6b78" stroke-width="1.100"/><path d="M12 3.500q1.500 2.500 0 5M14 2q2.500 4 0 8" fill="none" stroke="#7a8894" stroke-width="0.900"/></svg>
<div class="abs" style="left:0;top:162.0px;width:270.500px;height:20.0px;background:linear-gradient(#fdfdfd,#ececec 60%,#dedede);border-bottom:1px solid #8c8c8c;border-top:1px solid #fff"></div><svg style="left:6px;top:170.0px" width="8" height="6"><path d="M0 0h7l-3.500 5z" fill="#444"/></svg><div class="abs" style="left:20.500px;top:166.0px;font-size:11.500px;color:#333;letter-spacing:0.25px;white-space:nowrap;-webkit-text-stroke:0.3px #333;transform:scaleX(0.884);transform-origin:0 0">Presenters (1)</div>
<div class="abs" style="left:0;top:182px;width:270.500px;height:22px;background:#0c5fd6"></div>
<svg style="left:10px;top:185.500px" width="14" height="14" viewBox="0 0 18 18"><rect x="0.500" y="1.500" width="12" height="9" fill="#cfe3f6" stroke="#e8f0f8" stroke-width="1"/><path d="M4 13h5M6.500 10.500V13" stroke="#e8f0f8" stroke-width="1.200"/><circle cx="12.500" cy="9" r="2.800" fill="#f2dfc0" stroke="#6b5a3a" stroke-width="0.700"/><path d="M8 17q0-5 4.500-5t4.500 5z" fill="#c8d8ea" stroke="#5a6a7a" stroke-width="0.700"/></svg>
<svg style="left:-909px;top:-260px" width="1280" height="720" role="img" aria-label="presenter"><text x="962.4" y="456" font-size="9.5" font-weight="bold" fill="#fff" text-anchor="middle" direction="rtl" textLength="40" lengthAdjust="spacingAndGlyphs" font-family="'Liberation Sans',sans-serif">را تکبندی‌سم</text></svg>
<svg style="left:248px;top:184px" width="15" height="18" viewBox="0 0 15 18"><rect x="4" y="1" width="6" height="10" rx="3" fill="#e8e8ee" stroke="#8a94a0" stroke-width="0.800"/><path d="M2 8.500q0 4.500 5 4.500t5-4.500M7 13v2.500M4 16h6" fill="none" stroke="#dfe6ee" stroke-width="1.100"/><path d="M1.500 14.500L13 2" stroke="#e01818" stroke-width="2"/></svg>
<div class="abs" style="left:0;top:204.0px;width:270.500px;height:19.0px;background:linear-gradient(#fdfdfd,#ececec 60%,#dedede);border-bottom:1px solid #8c8c8c;border-top:1px solid #fff"></div><svg style="left:6px;top:212.0px" width="8" height="6"><path d="M0 0h7l-3.500 5z" fill="#444"/></svg><div class="abs" style="left:20.500px;top:208.0px;font-size:11.500px;color:#333;letter-spacing:0.25px;white-space:nowrap;-webkit-text-stroke:0.3px #333;transform:scaleX(0.920);transform-origin:0 0">Participants (117)</div>
<div class="abs" style="left:0;top:223px;width:270.500px;height:22px;background:#fff;border-bottom:1px solid #e2e2e2"></div>
<svg style="left:11.500px;top:226.500px" width="12.500" height="15" viewBox="0 0 16 17"><circle cx="8" cy="4.800" r="3.900" fill="#f2dfc0" stroke="#6a6a5a" stroke-width="1.100"/><path d="M1.500 16q-0.500-6.500 3.500-7.500h6q4 1 3.500 7.500z" fill="#5b9be0" stroke="#3a6aa8" stroke-width="0.900"/></svg>
<div class="abs" style="left:34px;top:227.500px;font-size:10.500px;font-weight:bold;color:#111;letter-spacing:0.15px;white-space:nowrap;transform:scaleX(0.91);transform-origin:0 0">Abolfazl karimi 40011712360</div>
<svg style="left:11.500px;top:247.500px" width="12.500" height="15" viewBox="0 0 16 17"><circle cx="8" cy="4.800" r="3.700" fill="#f2f2f2" stroke="#8a8a8a" stroke-width="0.900"/></svg>
<div class="abs" style="left:270.500px;top:79px;width:13.500px;height:172px;background:#c2c2c2;border-left:1px solid #a8a8a8"></div>
<div class="abs" style="left:271.500px;top:79.500px;width:12px;height:10px;background:#fbfbfb;border:1px solid #8a8a8a"><div class="abs" style="left:3px;top:1.500px;width:4px;height:1px;background:#333;box-shadow:0 2px 0 #333,0 4px 0 #333"></div></div>
</div>
<!-- ===== chat pod ===== -->
<div id="chat" class="pod" style="left:909px;top:511px;width:278px;height:167px;background:#f0f0f0">
<div class="podhead" style="height:29px;border-top:1px solid #fff;border-bottom:1px solid #9a9a9a;box-shadow:none"><div class="podtitle nx" style="font-size:14.500px;top:4px;left:6px;letter-spacing:0.4px;transform:scaleX(0.83)">Chat</div><div class="abs nx" style="left:40px;top:7px;font-size:11.500px;color:#333;letter-spacing:0.2px;transform:scaleX(0.85)">(Everyone)</div>
<svg style="left:250px;top:10px" width="16" height="11"><path d="M0 0.500h9M0 3.500h9M0 6.500h9M0 9.500h9" stroke="#b0b0b0" stroke-width="1"/><path d="M10.500 3h4.500l-2.200 2.500z" fill="#b0b0b0"/></svg>
</div>
<div class="abs" style="left:263px;top:30px;width:15px;height:86px;background:#c6c6c6;border-left:1px solid #b0b0b0"></div>
<div class="abs" style="left:264px;top:106px;width:14px;height:9px;background:#f8f8f8;border:1px solid #999"><div class="abs" style="left:5px;top:1px;width:2px;height:1px;background:#333;box-shadow:0 2px 0 #333,0 4px 0 #333"></div></div>
<svg style="left:-909px;top:-511px" width="1280" height="720" role="img" aria-label="chat messages"><g font-family="'Liberation Sans',sans-serif" text-anchor="middle">
<text x="943" y="563.6" font-size="10" font-weight="bold" fill="#111" textLength="54" lengthAdjust="spacingAndGlyphs">یم سلطان‌یمر:</text>
<text x="1020.5" y="563.6" font-size="10" fill="#222" textLength="95" lengthAdjust="spacingAndGlyphs">م استاد؟یچطور کنترلش کن</text>
<text x="942.8" y="583.8" font-size="10" font-weight="bold" fill="#111" textLength="54.6" lengthAdjust="spacingAndGlyphs">یرضاچمل‌یعل:</text>
<text x="1000.6" y="583.8" font-size="10" fill="#222" textLength="53.8" lengthAdjust="spacingAndGlyphs">صدا مشکل داره</text>
<text x="951.6" y="604.4" font-size="9" font-weight="bold" fill="#111" textLength="55" lengthAdjust="spacingAndGlyphs">کردستان استان:</text>
<text x="1050" y="604.4" font-size="10" fill="#2a52d0" textLength="136.6" lengthAdjust="spacingAndGlyphs">دوستان ورود و خروج کنید درست میشه</text>
</g></svg>
<div class="abs" style="left:6.500px;top:86px;font-size:9.500px;font-weight:bold;color:#111">4</div>
<div class="abs" style="left:0;top:115px;width:278px;height:30px;background:#ececec;border-top:1px solid #c4c4c4"></div>
<div class="abs" style="left:7px;top:119.500px;width:233px;height:21.500px;background:#fff;border:1px solid #8f8f8f;border-radius:4px;box-shadow:inset 0 1px 1px rgba(0,0,0,0.15)"></div>
<div class="abs" style="left:243px;top:119.500px;width:27.500px;height:21.500px;border:1px solid #9a9a9a;border-radius:3px;background:linear-gradient(#f8f8f8,#e4e4e4)"><svg style="left:5px;top:3px" width="17" height="14" viewBox="0 0 17 14"><ellipse cx="9" cy="5.500" rx="7" ry="4.800" fill="#8c8c8c" stroke="#6a6a6a" stroke-width="0.800"/><path d="M4 8.500L2 13l5-3.200z" fill="#8c8c8c" stroke="#6a6a6a" stroke-width="0.600"/></svg></div>
<div class="abs" style="left:0;top:145px;width:278px;height:22px;background-color:#e4e4e4;background-image:repeating-linear-gradient(135deg,rgba(255,255,255,0.45) 0 2px,rgba(0,0,0,0.02) 2px 5px);border-top:1px solid #bdbdbd"></div>
<div class="abs" style="left:0;top:145px;width:58px;height:22px;background:linear-gradient(#fafafa,#ededed);border-right:1px solid #999;border-top:1px solid #ccc;font-size:11.500px;color:#222;padding:4px 0 0 6px;letter-spacing:0.2px;-webkit-text-stroke:0.25px #222"><div class="nx" style="transform:scaleX(0.86);white-space:nowrap">Everyone</div></div>
<div class="abs" style="left:58px;top:145px;width:66px;height:22px;background:linear-gradient(90deg,#bdbdbd,#d0d0d0 50%,#b8b8b8);border-right:1px solid #888;border-top:1px solid #aaa;font-size:11.500px;color:#222;padding:4px 0 0 7.500px;letter-spacing:0.2px;-webkit-text-stroke:0.25px #222"><div class="nx" style="transform:scaleX(0.87);white-space:nowrap">Presenters</div></div>
<div class="abs" style="left:124px;top:145px;width:59.500px;height:22px;background:linear-gradient(#f2c44c,#e4b43a);border-right:1px solid #c8a040;border-top:1px solid #d8b050;font-size:11.500px;color:#222;padding:4px 0 0 7.500px;letter-spacing:0.2px;-webkit-text-stroke:0.25px #222"><div class="nx" style="transform:scaleX(0.87);white-space:nowrap">Hosts</div></div>
</div>
<!-- ===== layouts panel ===== -->
<div id="layouts" class="abs" style="left:1208px;top:54px;width:72px;height:628px;background:#343434;border-left:2px solid #2a2a2a">
<div class="abs" style="left:0;top:0;width:70px;height:12px;background:#2a2a2a;border-bottom:1px solid #1c1c1c"></div>
<svg style="left:6px;top:2px" width="18" height="9"><path d="M0 0.500h9M0 3h9M0 5.500h9M0 8h9" stroke="#c8c8c8" stroke-width="1"/><path d="M10.500 3.500h4l-2 2.300z" fill="#c8c8c8"/></svg>
<svg style="left:58px;top:2.500px" width="8" height="8"><path d="M1 1l6 6M7 1L1 7" stroke="#e0e0e0" stroke-width="1.800"/></svg>
<div class="abs" style="left:6.500px;top:20px;width:56px;height:42px;background:#2b78d8;border:1px solid #3b8ae8"></div>
<svg style="left:9.500px;top:24.500px" width="50" height="34"><rect width="50" height="34" fill="#3a4a5e"/><rect x="0" y="0" width="50" height="2.500" fill="#2c3846"/><rect x="44" y="0.500" width="4" height="1.200" fill="#e88030"/><rect x="2" y="4" width="34.500" height="27.500" fill="#6290ca" stroke="#a8c6ea" stroke-width="0.600"/><rect x="38" y="4" width="10" height="8" fill="#6290ca" stroke="#a8c6ea" stroke-width="0.500"/><rect x="38" y="13.500" width="10" height="8.500" fill="#6290ca" stroke="#a8c6ea" stroke-width="0.500"/><rect x="38" y="23.500" width="10" height="8" fill="#6290ca" stroke="#a8c6ea" stroke-width="0.500"/></svg>
<div class="abs" style="left:10px;top:65px;font-size:12px;color:#d6d6d6;letter-spacing:0.1px;transform:scaleX(0.875);transform-origin:0 0;white-space:nowrap">Sharing</div>
<svg style="left:9.500px;top:91px" width="51" height="36"><rect width="51" height="36" fill="#3c3c3c" stroke="#4a4a4a" stroke-width="1"/><rect x="0" y="0" width="51" height="3" fill="#2a2a2a"/><rect x="45" y="1" width="4" height="1.200" fill="#e88030"/><rect x="1.500" y="5" width="36" height="17" fill="#b2b2b2"/><rect x="39" y="5" width="10" height="17" fill="#b2b2b2"/><rect x="1.500" y="24" width="17" height="10" fill="#b2b2b2"/><rect x="20.500" y="24" width="17" height="10" fill="#b2b2b2"/><rect x="39" y="24" width="10" height="10" fill="#b2b2b2"/></svg>
<div class="abs" style="left:10px;top:134px;font-size:12px;color:#d6d6d6;letter-spacing:0.1px;transform:scaleX(0.860);transform-origin:0 0;white-space:nowrap">Discussion</div>
<svg style="left:9.500px;top:160px" width="51" height="36"><rect width="51" height="36" fill="#3c3c3c" stroke="#4a4a4a" stroke-width="1"/><rect x="0" y="0" width="51" height="3" fill="#2a2a2a"/><rect x="45" y="1" width="4" height="1.200" fill="#e88030"/><rect x="1.500" y="4.500" width="35.500" height="20" fill="#b2b2b2"/><rect x="39" y="4.500" width="10" height="9" fill="#b2b2b2"/><rect x="39" y="15.500" width="10" height="9" fill="#b2b2b2"/><rect x="1.500" y="26.500" width="17" height="8" fill="#b2b2b2"/><rect x="20.500" y="26.500" width="16.500" height="8" fill="#b2b2b2"/><rect x="39" y="26.500" width="10" height="8" fill="#b2b2b2"/></svg>
<div class="abs" style="left:10px;top:202px;font-size:12px;color:#d6d6d6;letter-spacing:0.1px;transform:scaleX(0.840);transform-origin:0 0;white-space:nowrap">Collabo...</div>
<svg style="left:11px;top:595px" width="18" height="17" viewBox="0 0 18 17"><path d="M3.500 2.500L14.500 14" stroke="#c4c4c4" stroke-width="2.600" stroke-linecap="round"/><path d="M1.200 3.200a3.200 3.200 0 0 0 5.500 2.200L4.500 4.800 5.200 1.600a3.200 3.200 0 0 0-4 1.600z" fill="#c4c4c4"/><path d="M14.500 2.500L3 14.500" stroke="#c4c4c4" stroke-width="2.400" stroke-linecap="round"/><path d="M13 1.500l3 0.500-0.500 3z" fill="#c4c4c4"/></svg>
<svg style="left:43px;top:595px" width="17" height="17"><path d="M8.500 1.500v14M1.500 8.500h14" stroke="#cdcdcd" stroke-width="2.300"/></svg>
</div>
<!-- ===== taskbar ===== -->
<div id="taskbar" class="abs" style="left:0;top:682px;width:1280px;height:38px;background:linear-gradient(90deg,#213b45,#1f3946 45%,#1d3347 68%,#1b2c48 85%,#1b2a4a)">
<div class="abs" style="left:0;top:-1px;width:1280px;height:39px">
<div class="abs" style="left:277px;top:0;width:45px;height:39px;background:rgba(255,255,255,0.12)"></div>
<div class="abs" style="left:143px;top:36px;width:38px;height:3px;background:#76b9ed"></div>
<div class="abs" style="left:277px;top:36px;width:45px;height:3px;background:#76b9ed"></div>
<svg style="left:15px;top:12px" width="16" height="16"><path d="M0 2.300L6.500 1.400V7.500H0zM7.300 1.300L15.500 0V7.500H7.300zM0 8.300H6.500V14.400L0 13.500zM7.300 8.300H15.500V15.800L7.300 14.600z" fill="#fff"/></svg>
<svg style="left:58px;top:8px" width="24" height="24" viewBox="0 0 24 24"><defs><linearGradient id="eg1" x1="0" y1="0" x2="1" y2="1"><stop offset="0" stop-color="#35c1f1"/><stop offset="1" stop-color="#0c59a4"/></linearGradient><linearGradient id="eg2" x1="0" y1="0" x2="1" y2="0"><stop offset="0" stop-color="#2fbfe0"/><stop offset="1" stop-color="#6fdc4a"/></linearGradient></defs><circle cx="12" cy="12" r="11" fill="url(#eg1)"/><path d="M1.500 10C3 3 9 1 12 1c6 0 11 4 11 9 0 3-2.500 5-5 5-3 0-3-2-2.500-3 .5-1 .3-4-4-4-4.500 0-7 4-7 7-2-1.500-3.500-4-3-5z" fill="url(#eg2)"/><path d="M9 21c-4-1.500-5-6-3-9 1-1.500 3-2.500 5-2.300-2.500 1.500-2.500 6 .5 8 2.500 1.700 6 1 8-.5-2 3.500-6.500 5.300-10.500 3.800z" fill="#0b4f95"/></svg>
<svg style="left:105px;top:10px" width="24" height="20" viewBox="0 0 24 20"><path d="M1 2h7l2 2h13v15H1z" fill="#e8a41a"/><path d="M1 6h22v13H1z" fill="#fcd15c"/><path d="M6 12h12v7H6z" fill="#3f8fdc"/><path d="M9 14.500h6v4.500H9z" fill="#fcd15c"/></svg>
<svg style="left:150px;top:8px" width="26" height="26" viewBox="0 0 26 26"><circle cx="12" cy="12" r="11.500" fill="#e33b2e"/><path d="M12 12L2 6.500A11.500 11.500 0 0 0 8 22.800z" fill="#2a9d4a"/><path d="M12 12L8 22.800A11.500 11.500 0 0 0 23.500 12z" fill="#f6c31c"/><circle cx="12" cy="12" r="5.200" fill="#fff"/><circle cx="12" cy="12" r="4.200" fill="#3b78e7"/><circle cx="18" cy="18.500" r="6.500" fill="#f2e21c"/><path d="M14.500 22c0-3 1.500-4 3.500-4s3.500 1 3.500 4v3h-7z" fill="#111"/><circle cx="18" cy="15.800" r="2.600" fill="#222"/></svg>
<svg style="left:197px;top:9px" width="22" height="22"><rect x="0.500" y="0.500" width="21" height="21" fill="#0a2336" stroke="#31a8ff" stroke-width="1.500"/><text x="11" y="16" font-size="12" font-weight="bold" text-anchor="middle" fill="#31a8ff" font-family="Liberation Sans,sans-serif">Ps</text></svg>
<svg style="left:242px;top:8px" width="26" height="24" viewBox="0 0 26 24"><circle cx="14.500" cy="12" r="10.500" fill="#e0492a"/><path d="M14.500 1.500A10.500 10.500 0 0 1 25 12H14.500z" fill="#f58a6a"/><path d="M14.500 12H25a10.500 10.500 0 0 1-3 7.400z" fill="#c43a1c"/><rect x="0.500" y="5.500" width="13" height="13" rx="1.500" fill="#c2391c"/><text x="7" y="16" font-size="10" font-weight="bold" text-anchor="middle" fill="#fff" font-family="Liberation Sans,sans-serif">P</text></svg>
<svg style="left:289px;top:9px" width="22" height="22"><rect x="0.500" y="0.500" width="21" height="21" fill="#10281e" stroke="#3fb783" stroke-width="1.500"/><path d="M6 6l10 10M16 6L6 16" stroke="#7fe4b4" stroke-width="2"/><circle cx="6" cy="6" r="2" fill="#7fe4b4"/><circle cx="16" cy="6" r="2" fill="#7fe4b4"/><circle cx="6" cy="16" r="1.300" fill="#7fe4b4"/><circle cx="16" cy="16" r="1.300" fill="#7fe4b4"/></svg>
<svg style="left:985px;top:10px" width="12" height="10"><path d="M1 8l5-5 5 5" fill="none" stroke="#fff" stroke-width="1.300"/></svg>
<svg style="left:1005px;top:8px" width="16" height="16" viewBox="0 0 16 16"><circle cx="8" cy="8" r="6" fill="#2f7fd0"/><path d="M1 10q4-7 10-6q-5 1-6 6z" fill="#f0c020"/><path d="M4 13q6 2 10-3q-2 5-7 5z" fill="#4ac040"/></svg>
<svg style="left:1029px;top:7px" width="12" height="19" viewBox="0 0 12 19"><rect x="3" y="0.500" width="6" height="11" rx="3" fill="#fff"/><path d="M1 8v1.500a5 5 0 0 0 10 0V8" fill="none" stroke="#fff" stroke-width="1.100"/><path d="M6 14.500v3M3 18h6" stroke="#fff" stroke-width="1.100"/></svg>
<svg style="left:1051px;top:7px" width="18" height="18" viewBox="0 0 18 18"><rect x="0.600" y="2.600" width="14" height="11" fill="none" stroke="#fff" stroke-width="1.100"/><path d="M3 12l3-4 2 2 2-3" fill="none" stroke="#fff" stroke-width="1"/><circle cx="13" cy="13.500" r="3.300" fill="#e81123"/></svg>
<svg style="left:1076px;top:9px" width="16" height="15" viewBox="0 0 16 15"><path d="M2 14A12 12 0 0 1 14 2M5.500 14A8.500 8.500 0 0 1 14 5.500M9 14a5 5 0 0 1 5-5" fill="none" stroke="#9aa4b0" stroke-width="1.300"/><circle cx="12.500" cy="12.500" r="1.600" fill="#fff"/></svg>
<svg style="left:1096px;top:11px" width="18" height="12" viewBox="0 0 18 12"><rect x="3.500" y="2.500" width="12" height="7" fill="none" stroke="#fff" stroke-width="1"/><rect x="16" y="4.500" width="1.500" height="3" fill="#fff"/><rect x="5" y="4" width="6" height="4" fill="#fff"/><path d="M0 3h3v-2M1.500 3v4" stroke="#fff" stroke-width="1" fill="none"/></svg>
<svg style="left:1118px;top:9px" width="16" height="15" viewBox="0 0 16 15"><path d="M0.500 5h3l3.500-3.500v12L3.500 10h-3z" fill="none" stroke="#fff" stroke-width="1"/><path d="M9 5q1.500 2.500 0 5M11 3q3 4.500 0 9M13 1.500q4 6 0 12" fill="none" stroke="#fff" stroke-width="0.900"/></svg>
<div class="abs nx" style="left:1142.500px;top:11px;font-size:12px;color:#fff;letter-spacing:-0.2px;transform:scaleX(0.86)">ENG</div>
<div class="abs" style="left:1165.500px;top:3.500px;width:70px;text-align:center;font-size:12px;color:#fff;line-height:17px;letter-spacing:-0.1px;transform:scaleX(0.93)">8:29 PM<br>4/8/2024</div>
<svg style="left:1240.500px;top:12px" width="18" height="18" viewBox="0 0 18 18"><path d="M1.500 1.500h14v11h-4.500l-2.500 3-2.500-3h-4.500z" fill="none" stroke="#fff" stroke-width="1.200"/></svg>
<div class="abs" style="left:1275px;top:1px;width:1px;height:39px;background:#6c788a"></div>
</div>
</div>
</body>
</html>
